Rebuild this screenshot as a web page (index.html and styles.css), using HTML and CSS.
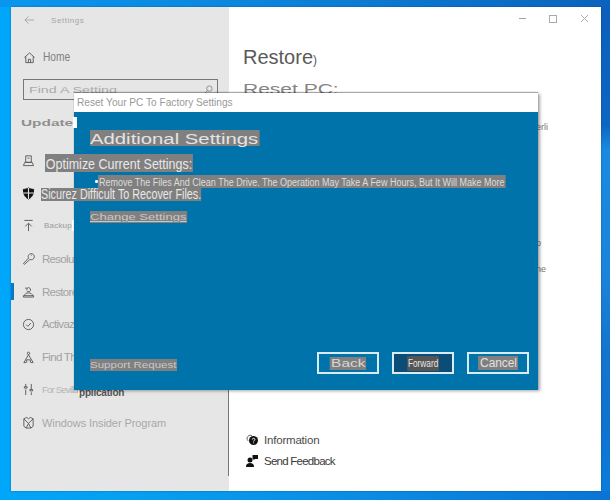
FILE: index.html
```html
<!DOCTYPE html>
<html lang="en">
<head>
<meta charset="utf-8">
<title>Settings</title>
<link rel="stylesheet" href="styles.css">
</head>
<body>
<div class="window">
  <aside class="sidebar">
    <div class="app-bar">
      <svg class="ico-back" viewBox="0 0 12 10"><path d="M5 1 1 5l4 4M1 5h10"/></svg>
      <span class="app-name">Settings</span>
    </div>
    <div class="nav-home">
      <svg class="ico" viewBox="0 0 14 14"><path d="M1.500 7 7 2l5.500 5M3 6v6.500h8V6M5.800 12.500V9h2.400v3.500"/></svg>
      <span class="home-label">Home</span>
    </div>
    <div class="search">
      <span class="search-text">Find A Setting</span>
      <svg class="ico-search" viewBox="0 0 10 10"><circle cx="6" cy="4" r="3"/><path d="M4 6.200 1 9"/></svg>
    </div>
    <div class="section"><span class="section-text">Update</span><i class="tail"></i></div>
    <nav class="nav">
      <div class="item"><svg class="ico" viewBox="0 0 14 14"><path d="M4 2h6v7H4zM1.500 12.500 3 9h8l1.500 3.500zM6 4.500h2"/></svg></div>
      <div class="item"><svg class="ico solid" viewBox="0 0 14 14"><path d="M7 1c2 1.200 3.500 1.500 5.500 1.500 0 5-1.500 8.500-5.500 10.500C3 11 1.500 7.500 1.500 2.500 3.500 2.500 5 2.200 7 1z"/><path class="cut" d="M7 1v12M1.500 6.500h11"/></svg></div>
      <div class="item"><svg class="ico" viewBox="0 0 14 14"><path d="M2.500 1.500h9M7 13V4.500M3.500 8 7 4.500 10.500 8"/></svg><span class="label small">Backup</span><i class="tail"></i></div>
      <div class="item"><svg class="ico" viewBox="0 0 14 14"><path d="M1.500 12.500 7 6.500a3.300 3.300 0 1 1 1.500 1.500L2.800 13.300z"/><path d="M10 3.500h.8"/></svg><span class="label narrow">Resoluz</span></div>
      <div class="item active"><svg class="ico" viewBox="0 0 14 14"><path d="M1.500 11.500h11V13h-11zM2.500 11.500C3 9.500 4.500 8.500 7 8.500s4 1 4.500 3M5 6a2.200 2.200 0 1 0 .5-2.500M4.300 2.500v1.800h1.800"/></svg><span class="label narrow">Restores-</span><i class="tail"></i></div>
      <div class="item"><svg class="ico" viewBox="0 0 14 14"><circle cx="7" cy="7" r="5.500"/><path d="m4.500 7.200 1.800 1.800 3.200-3.500"/></svg><span class="label narrow">Activaz</span></div>
      <div class="item"><svg class="ico" viewBox="0 0 14 14"><circle cx="7" cy="2.500" r="1.300"/><path d="M7 4 2 12.500h2.500M7 4l5 8.500H9.500M5 12.500V9.500h4v3"/></svg><span class="label narrow">Find The</span><i class="tail"></i></div>
      <div class="item"><svg class="ico" viewBox="0 0 14 14"><path d="M4 1v3M4 7v6M10 1v6M10 10v3M2.500 5.500h3v-1.500h-3zM8.500 8.500h3V7h-3z"/></svg><span class="label faint">For Sevilla</span><i class="tail"></i><span class="clipped">pplication</span></div>
      <div class="item"><svg class="ico" viewBox="0 0 14 14"><path d="M2 3 5 1.500 7 3l2-1.500L12 3v8l-2.500 2h-5L2 11zM2 3l5 5 5-5M4.500 13 7 8l2.500 5"/></svg><span class="label insider">Windows Insider Program</span></div>
    </nav>
  </aside>

  <main class="content">
    <div class="controls">
      <i class="ctl-min"></i><i class="ctl-max"></i>
      <svg class="ctl-close" viewBox="0 0 9 9"><path d="m1 1 7 7M8 1 1 8"/></svg>
    </div>
    <h1 class="title">Restore<span class="title-mark">)</span></h1>
    <h2 class="subtitle">Reset PC:</h2>
    <div class="behind">
      <p class="frag frag-a">erli</p>
      <p class="frag frag-b">o</p>
      <p class="frag frag-c">ne</p>
    </div>
    <div class="links">
      <div class="link">
        <svg class="link-ico" viewBox="0 0 14 14"><path class="thin" d="M7 2.500a4 4 0 0 0-5 2.500c0 1.500.6 2.300 1.300 3"/><circle cx="8.500" cy="7.500" r="4.500"/><path class="rev" d="M7.300 6.500c0-1.600 2.600-1.600 2.600 0 0 1-1.300 1-1.300 2M8.600 9.500v.8"/></svg>
        <span>Information</span>
      </div>
      <div class="link link-send">
        <svg class="link-ico" viewBox="0 0 14 14"><circle cx="5" cy="6" r="2.500"/><path d="M1 13c0-3 1.500-4 4-4s4 1 4 4z"/><path d="M7.500 1h5.500v4H10L8.500 6.300V5h-1z"/></svg>
        <span>Send Feedback</span>
      </div>
    </div>
  </main>

  <section class="dialog">
    <div class="dialog-title"><span class="dialog-title-text">Reset Your PC To Factory Settings</span></div>
    <div class="dialog-body">
      <div class="h-additional"><span class="mark t-additional">Additional Settings</span></div>
      <div class="h-optimize"><span class="mark t-optimize">Optimize Current Settings:</span></div>
      <div class="h-remove"><span class="bullet"></span><span class="mark t-remove">Remove The Files And Clean The Drive. The Operation May Take A Few Hours, But It Will Make More</span></div>
      <div class="h-sicurez"><span class="mark t-sicurez">Sicurez Difficult To Recover Files.</span></div>
      <div class="h-change"><span class="mark t-change">Change Settings</span></div>
      <div class="dialog-foot">
        <span class="mark t-support">Support Request</span>
        <div class="buttons">
          <div class="btn"><span class="mark t-back">Back</span></div>
          <div class="btn btn-primary"><span class="t-forward">Forward</span></div>
          <div class="btn"><span class="mark t-cancel">Cancel</span></div>
        </div>
      </div>
    </div>
  </section>
</div>
</body>
</html>
```
FILE: styles.css
```css
* { box-sizing: border-box; }
html, body { height: 100%; }
body {
  margin: 0;
  overflow: hidden;
  font-family: "Liberation Sans", Arial, sans-serif;
  background:
    linear-gradient(90deg, #0a96ee 0, #0c86dd 40%, #0a62bd 100%) 0 0 / 100% 7px no-repeat,
    linear-gradient(90deg, #00a6f8 0, #06a0f2 20%, #0a8ce4 60%, #0a74d5 100%) 0 100% / 100% 9px no-repeat,
    linear-gradient(180deg, #0c5fbb 0, #0d66c2 25%, #1a8ae0 30%, #1a84da 55%, #1475cc 70%, #0f72cf 85%, #0a7edc 100%) 100% 0 / 9px 100% no-repeat,
    #00a6fa;
  position: relative;
}
.window {
  position: absolute;
  left: 11px;
  top: 7px;
  width: 590px;
  height: 484px;
  display: flex;
  background: #fff;
  box-shadow: 0 0 2px rgba(0, 40, 90, .4);
}

/* sidebar */
.sidebar {
  width: 218px;
  flex: none;
  background: #e6e6e6;
  border-right: 1px solid #e6e6e6;
  color: #8a8a8a;
  position: relative;
}
.sidebar::after {
  content: "";
  position: absolute;
  right: -1px;
  top: 383px;
  bottom: 15px;
  width: 1px;
  background: #777;
}
.app-bar { height: 26px; display: flex; align-items: center; padding: 0 0 0 13px; }
.ico-back { width: 11px; height: 10px; fill: none; stroke: #a5a5a5; stroke-width: 1; }
.app-name { margin-left: 16px; font-size: 8px; letter-spacing: .55px; color: #a5a5a5; }
.nav-home { height: 24px; margin-top: 12px; display: flex; align-items: center; padding-left: 12px; }
.ico { width: 13px; height: 13px; flex: none; fill: none; stroke: #5a5a5a; stroke-width: 1; }
.home-label { margin-left: 7px; font-size: 12px; color: #808080; transform: scaleX(.85); transform-origin: left; }
.search {
  margin: 10px 0 0 12px;
  width: 195px;
  height: 21px;
  border: 1.500px solid #777;
  display: flex;
  align-items: center;
  justify-content: space-between;
  padding: 0 4px 0 5px;
}
.search-text { display: block; font-size: 9.500px; color: #ababab; white-space: nowrap; transform: scaleX(1.5); transform-origin: left; }
.ico-search { width: 9px; height: 9px; fill: none; stroke: #888; }
.section {
  margin: 13px 0 0 10px;
  width: 56px;
  height: 18px;
  display: flex;
  align-items: center;
  position: relative;
  z-index: 2;
}
.section-text { display: block; font-size: 9.500px; font-weight: bold; color: #8f8f8f; white-space: nowrap; transform: scaleX(1.62); transform-origin: left; }
.tail { display: block; width: 3px; height: 11px; background: #fff; flex: none; margin-left: auto; }
.section .tail { width: 4px; }

.nav { margin-top: 13px; }
.item {
  height: 32.800px;
  width: 63px;
  display: flex;
  align-items: center;
  padding-left: 11px;
  white-space: nowrap;
  position: relative;
}
.item.active::before {
  content: "";
  position: absolute;
  left: 0;
  top: 8px;
  width: 3px;
  height: 17px;
  background: #0b79bf;
}
.label { margin-left: 7px; font-size: 11px; color: #a2a2a2; }
.small { font-size: 8px; margin-left: 9px; letter-spacing: .2px; color: #999; }
.narrow { letter-spacing: -.7px; font-size: 11.500px; }
.faint { font-size: 9.500px; letter-spacing: -.8px; color: #b5b5b5; }
.clipped {
  position: absolute;
  left: 68px;
  top: 13px;
  font-size: 10px;
  font-weight: bold;
  letter-spacing: -.2px;
  color: #555;
}
.insider { font-size: 11px; letter-spacing: -.08px; color: #a8a8a8; }
.solid { fill: #111; stroke: #111; }
.solid .cut { stroke: #e6e6e6; stroke-width: 1.200; fill: none; }

/* main */
.content { flex: 1; min-width: 0; padding: 0 0 0 14px; position: relative; color: #555; }
.controls {
  height: 26px;
  display: flex;
  align-items: center;
  justify-content: flex-end;
  gap: 23px;
  padding: 0 12px 3px 0;
}
.ctl-min { width: 7px; height: 1px; background: #a0a0a0; }
.ctl-max { width: 8px; height: 8px; border: 1px solid #aaa; }
.ctl-close { width: 9px; height: 9px; stroke: #aaa; fill: none; }
.title { margin: 11px 0 0; font-size: 20px; line-height: 26px; font-weight: normal; color: #5a5a5a; }
.title-mark { font-size: 12px; }
.subtitle { width: fit-content; margin: 5px 0 0; font-size: 15px; line-height: 22px; font-weight: normal; color: #858585; transform: scaleX(1.4); transform-origin: left; }
.behind { height: 0; position: relative; }
.frag { margin: 0; font-size: 9px; color: #777; position: absolute; }
.frag-a { left: 293px; top: 22px; }
.frag-b { left: 293px; top: 138px; }
.frag-c { left: 293px; top: 164px; }
.links { position: absolute; left: 16px; top: 422px; }
.link { height: 21px; display: flex; align-items: center; font-size: 11.500px; letter-spacing: -.2px; color: #4a4a4a; }
.link-send { letter-spacing: -.75px; color: #3a3a3a; }
.link-ico { width: 14px; height: 14px; flex: none; margin-right: 5px; fill: #111; stroke: none; }
.link-ico .thin { fill: none; stroke: #666; }
.link-ico .rev { fill: none; stroke: #fff; }

/* dialog */
.dialog {
  position: absolute;
  left: 63px;
  top: 86px;
  width: 464px;
  height: 297px;
  display: flex;
  flex-direction: column;
  box-shadow: 2px 1px 3px rgba(0, 0, 0, .35), 0 -1px 1px rgba(0, 0, 0, .3);
}
.dialog-title {
  height: 19px;
  flex: none;
  background: #fff;
  padding: 3px 0 0 3px;
  white-space: nowrap;
  color: #999;
}
.dialog-title-text { display: block; font-size: 11.500px; line-height: 13px; transform: scaleX(.88); transform-origin: left; }
.dialog-body { flex: 1; background: #0073ab; display: flex; flex-direction: column; padding: 18px 9px 16px 16px; }
.mark { background: #808080; color: #d8d8d8; display: inline-block; white-space: nowrap; transform-origin: left; }
.h-additional { height: 16px; }
.t-additional { font-size: 14px; line-height: 14px; padding: 2px 1px 0 0; color: #e4e4e4; transform: scaleX(1.45); }
.h-optimize { margin: 8px 0 0 -45px; height: 21px; position: relative; }
.t-optimize { font-size: 14.500px; line-height: 16px; padding: 2px 1px 0; color: #e8e8e8; transform: scaleX(.86); }
.h-remove { margin: 0 0 0 5px; height: 13px; display: flex; align-items: center; }
.bullet { width: 2.500px; height: 2.500px; border-radius: 50%; background: #fff; margin-right: 0; flex: none; }
.t-remove { font-size: 10px; line-height: 11px; padding: 2px 1px 0; color: #dcdcdc; transform: scaleX(.9); }
.h-sicurez { margin: 0 0 0 -49px; height: 12px; position: relative; }
.t-sicurez { font-size: 14px; line-height: 13px; color: #e8e8e8; position: relative; top: -3px; transform: scaleX(.77); }
.h-change { margin-top: 6px; height: 12px; }
.t-change { font-size: 9px; line-height: 12px; text-decoration: underline; color: #c8c8c8; transform: scaleX(1.45); }
.dialog-foot { margin-top: auto; display: flex; justify-content: space-between; align-items: flex-end; }
.t-support { font-size: 9px; line-height: 12px; margin-bottom: 3px; color: #c8c8c8; transform: scaleX(1.28); }
.buttons { display: flex; gap: 13px; }
.btn {
  width: 62px;
  height: 22px;
  border: 2px solid #d9ecf6;
  display: flex;
  align-items: center;
  justify-content: center;
}
.btn-primary { background: #0c4d78; }
.t-back { font-size: 11px; line-height: 13px; padding: 0 1px; color: #d8d8d8; transform-origin: center; transform: scaleX(1.4); }
.t-cancel { font-size: 12px; line-height: 14px; letter-spacing: -.1px; padding: 0 1px 0 2px; color: #e0e0e0; transform-origin: center; }
.t-forward { background: #555; color: #e6e6e6; font-size: 11.500px; line-height: 15px; padding: 0 1px; transform: scaleX(.72); display: inline-block; }
```
